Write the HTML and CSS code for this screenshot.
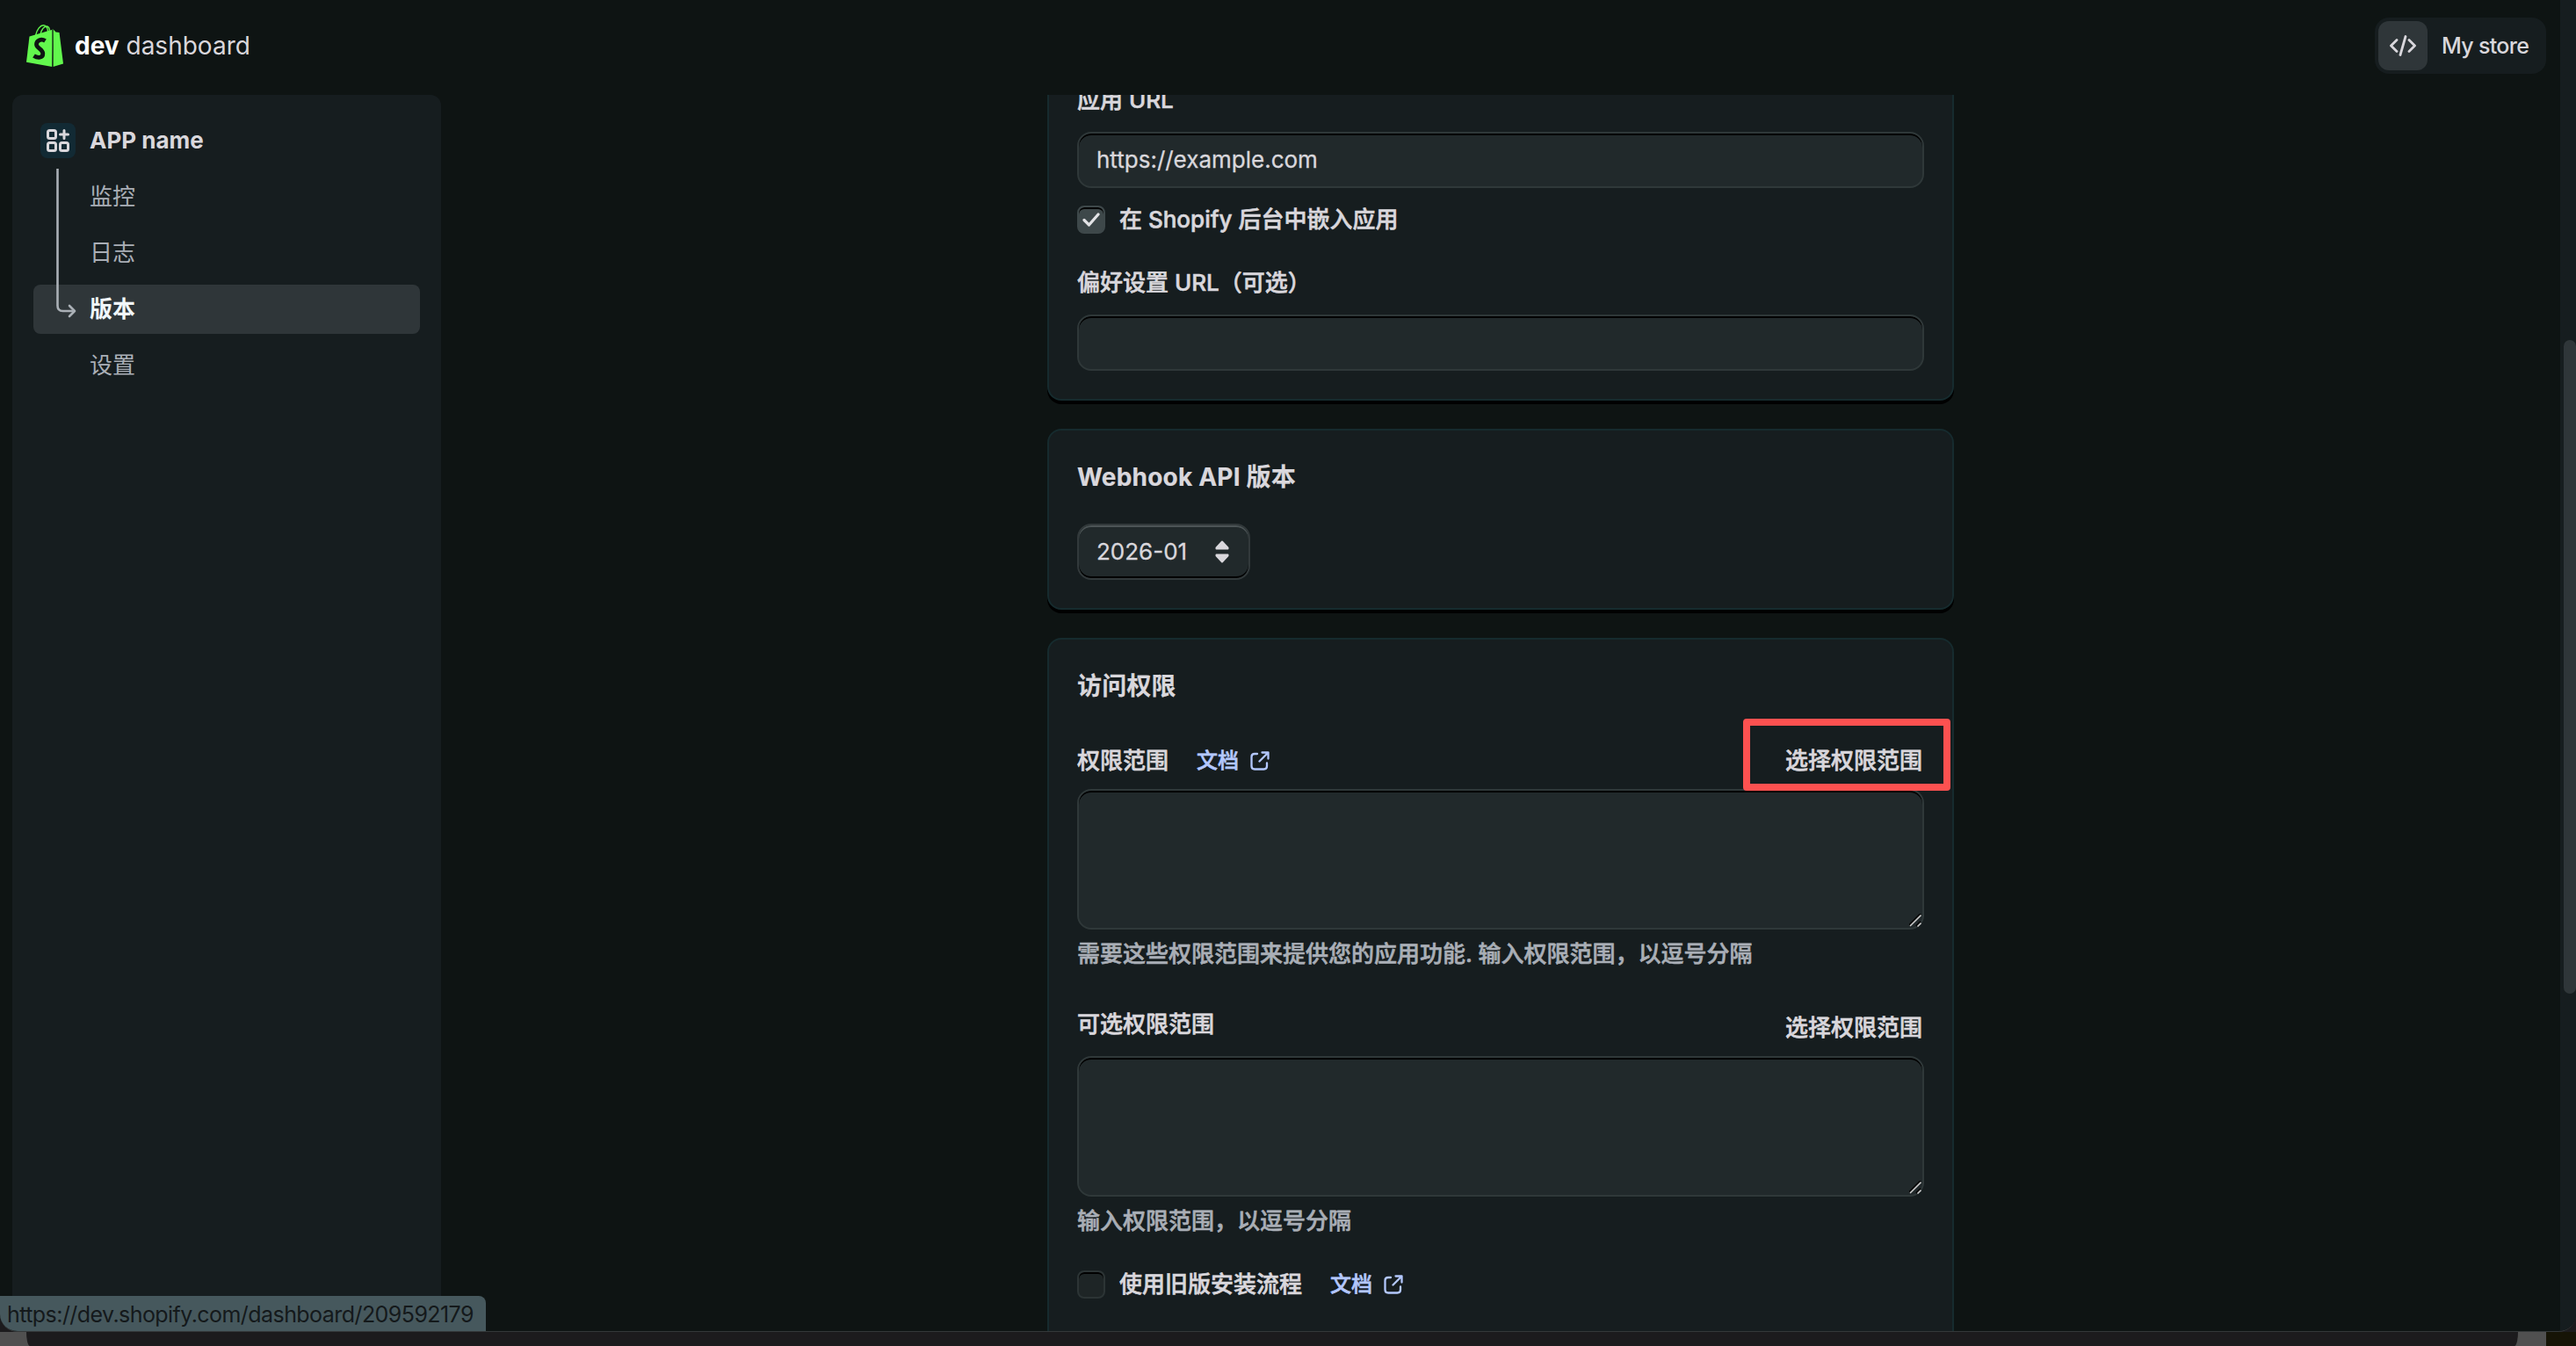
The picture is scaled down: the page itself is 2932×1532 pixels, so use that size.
FILE: index.html
```
<!DOCTYPE html>
<html lang="zh-CN">
<head>
    <meta charset="UTF-8">
    <title>dev dashboard</title>
    <link rel="stylesheet" href="styles.css">
</head>
<body>
    <div class="window">
        <div class="app">
            <header class="header">
                <div class="brand">
                    <svg class="logo" width="42" height="48" viewBox="0 0 42 48">
                        <path d="M3.500 13.500L30.500 5.500L29.400 48L0 42.700Z" fill="#62f84d"/>
                        <path d="M30.700 5.500L33.500 8.500L37.500 9L42 44.500L30.400 48Z" fill="#62f84d"/>
                        <path d="M10.500 12.500C12 5 16 0.800 19.500 0.800C23 0.800 24.500 5 24.500 9M16 11C17.500 5 20.500 2 23.500 2C25.500 2.500 26.500 5 26.500 8" fill="none" stroke="#62f84d" stroke-width="1.400"/>
                        <path d="M29.900 6V48" stroke="#0e1413" stroke-width="1"/>
                        <path d="M21.500 18.500C17 15.500 11.500 18 11.500 22.500C11.500 27 18.800 28 18.800 33C18.800 38 13 38.500 8.500 35.500" fill="none" stroke="#0e1413" stroke-width="4.800"/>
                    </svg>
                    <div class="brand-name"><b>dev</b> dashboard</div>
                </div>
                <div class="store">
                    <div class="store-icon">
                        <svg width="30" height="24" viewBox="0 0 30 24" fill="none" stroke="#d9d7dc" stroke-width="2.800" stroke-linecap="round" stroke-linejoin="round">
                            <path d="M8 5.500L1.500 12L8 18.500M22 5.500L28.500 12L22 18.500M18 1.500L12 22.500"/>
                        </svg>
                    </div>
                    <span>My store</span>
                </div>
            </header>
            <div class="body">
                <nav class="sidebar">
                    <div class="nav-item nav-app">
                        <div class="app-icon">
                            <svg width="26" height="26" viewBox="0 0 26 26" fill="none" stroke="#d9d7dc" stroke-width="3" stroke-linecap="round">
                                <rect x="1.500" y="1.500" width="9" height="9" rx="2"/>
                                <rect x="1.500" y="15.500" width="9" height="9" rx="2"/>
                                <rect x="15.500" y="15.500" width="9" height="9" rx="2"/>
                                <path d="M20 1.500V10.500M15.500 6H24.500"/>
                            </svg>
                        </div>
                        APP name
                    </div>
                    <div class="nav-item">监控</div>
                    <div class="nav-item">日志</div>
                    <div class="nav-item active">版本</div>
                    <div class="nav-item">设置</div>
                    <svg class="nav-line" width="24" height="170" viewBox="0 0 24 170" fill="none" stroke="#aab0b6" stroke-width="2.600">
                        <path d="M1.500 0V156Q1.500 162 7.500 162H21"/>
                        <path d="M15 156L21 162L15 168" stroke-linecap="round" stroke-linejoin="round"/>
                    </svg>
                </nav>
                <main class="main">
                    <section class="card card-url">
                        <div class="label">应用 URL</div>
                        <div class="input">https://example.com</div>
                        <div class="check-row">
                            <div class="checkbox checked">
                                <svg width="20" height="16" viewBox="0 0 20 16" fill="none" stroke="#e3e3e6" stroke-width="3.200" stroke-linecap="round" stroke-linejoin="round">
                                    <path d="M2 8.500L7.500 14L18 2"/>
                                </svg>
                            </div>
                            <span>在 Shopify 后台中嵌入应用</span>
                        </div>
                        <div class="label label-pref">偏好设置 URL（可选）</div>
                        <div class="input"></div>
                    </section>
                    <section class="card card-webhook">
                        <h2>Webhook API 版本</h2>
                        <div class="select">
                            2026-01
                            <svg width="16" height="26" viewBox="0 0 16 26" fill="#d9d7dc" stroke="#d9d7dc" stroke-width="2" stroke-linejoin="round">
                                <path d="M8 1.500L14.500 8.500V9.500H1.500V8.500Z"/>
                                <path d="M8 24.500L14.500 17.500V16.500H1.500V17.500Z"/>
                            </svg>
                        </div>
                    </section>
                    <section class="card card-access">
                        <h2>访问权限</h2>
                        <div class="field-head head-scope">
                            <span>权限范围</span>
                            <span class="link">文档
                                <svg width="22" height="22" viewBox="0 0 22 22" fill="none" stroke="#b3c7fd" stroke-width="2.300" stroke-linecap="round" stroke-linejoin="round">
                                    <path d="M8 3H5Q1.500 3 1.500 6.500V17Q1.500 20.500 5 20.500H15.500Q19 20.500 19 17V13.500M13.500 1.500H20.500V8.500M20.500 1.500L10.500 11.500"/>
                                </svg>
                            </span>
                            <span class="pick">选择权限范围<i class="mark"></i></span>
                        </div>
                        <div class="textarea">
                            <svg class="grip" width="14" height="15" viewBox="0 0 14 15" stroke-width="2"><path d="M0 13L13 0M8 14L13 9" stroke="#000"/><path d="M1 14L13.500 1.500M9.500 14.500L13.500 10.500" stroke="#c9caca" stroke-width="1.600"/></svg>
                        </div>
                        <div class="help">需要这些权限范围来提供您的应用功能. 输入权限范围，以逗号分隔</div>
                        <div class="field-head head-optional">
                            <span>可选权限范围</span>
                            <span class="pick pick-low">选择权限范围</span>
                        </div>
                        <div class="textarea">
                            <svg class="grip" width="14" height="15" viewBox="0 0 14 15" stroke-width="2"><path d="M0 13L13 0M8 14L13 9" stroke="#000"/><path d="M1 14L13.500 1.500M9.500 14.500L13.500 10.500" stroke="#c9caca" stroke-width="1.600"/></svg>
                        </div>
                        <div class="help">输入权限范围，以逗号分隔</div>
                        <div class="check-row check-legacy">
                            <div class="checkbox"></div>
                            <span>使用旧版安装流程</span>
                            <span class="link">文档
                                <svg width="22" height="22" viewBox="0 0 22 22" fill="none" stroke="#b3c7fd" stroke-width="2.300" stroke-linecap="round" stroke-linejoin="round">
                                    <path d="M8 3H5Q1.500 3 1.500 6.500V17Q1.500 20.500 5 20.500H15.500Q19 20.500 19 17V13.500M13.500 1.500H20.500V8.500M20.500 1.500L10.500 11.500"/>
                                </svg>
                            </span>
                        </div>
                    </section>
                </main>
            </div>
        </div>
        <div class="scrollbar"><div class="thumb"></div></div>
        <div class="status">https://dev.shopify.com/dashboard/209592179</div>
    </div>
    <div class="desktop">
        <div class="desk-left"></div>
        <div class="dock"></div>
        <div class="desk-right"></div>
        <div class="desk-end"></div>
    </div>
</body>
</html>
```

FILE: styles.css
```
*{
    box-sizing: border-box;
}
body{
    margin: 0;
    width: 2932px;
    height: 1532px;
    overflow: hidden;
    background-color: #1c1b1d;
    color: #d9d7dc;
    font-family: Inter, "Noto Sans CJK SC", sans-serif;
    font-size: 26px;
    line-height: 40px;
}
svg{
    display: block;
    flex: none;
}
.window{
    position: relative;
    display: flex;
    height: 1516px;
    overflow: hidden;
    background-color: #0e1413;
    border-bottom: 1px solid #343839;
    border-radius: 0 0 20px 20px;
}
.app{
    width: 2914px;
    height: 1515px;
}

/* header */
.header{
    display: flex;
    justify-content: space-between;
    align-items: center;
    height: 108px;
    padding: 0 16px 4px 30px;
}
.brand{
    display: flex;
    align-items: center;
    gap: 13px;
}
.brand-name{
    font-size: 28px;
}
.brand-name b{
    color: #fff;
}
.store{
    display: flex;
    align-items: center;
    gap: 16px;
    width: 195px;
    height: 64px;
    padding-left: 4px;
    border-radius: 16px;
    background-color: #161d1f;
    font-size: 25px;
    font-weight: 500;
    letter-spacing: -0.7px;
}
.store-icon{
    display: flex;
    align-items: center;
    justify-content: center;
    width: 56px;
    height: 56px;
    border-radius: 12px;
    background-color: #2f3639;
}

/* sidebar */
.body{
    display: flex;
    height: 1407px;
    padding-left: 14px;
}
.sidebar{
    position: relative;
    width: 488px;
    padding: 24px;
    border-radius: 12px 12px 0 0;
    background-color: #161d1f;
}
.nav-item{
    display: flex;
    align-items: center;
    height: 56px;
    margin-bottom: 8px;
    padding-left: 64px;
    border-radius: 8px;
    color: #a9aeb6;
}
.nav-app{
    gap: 16px;
    padding-left: 8px;
    color: #d9d7dc;
    font-weight: 700;
}
.app-icon{
    display: flex;
    align-items: center;
    justify-content: center;
    width: 40px;
    height: 40px;
    border-radius: 8px;
    background-color: #122a34;
}
.active{
    background-color: #2f3639;
    color: #f1f7fa;
    font-weight: 700;
}
.nav-line{
    position: absolute;
    left: 50px;
    top: 84px;
}

/* content */
.main{
    width: 1032px;
    height: 1407px;
    margin-left: 690px;
    overflow: hidden;
}
.card{
    display: flow-root;
    margin-bottom: 32px;
    padding: 32px;
    border: 2px solid #162b2e;
    border-radius: 16px;
    background-color: #161d1f;
    box-shadow: 0 4px 0 #000;
    font-weight: 450;
    -webkit-text-stroke: 0.6px;
}
.card-url{
    height: 348px;
    padding-top: 0;
    border-top: 0;
    border-radius: 0 0 16px 16px;
}
.card-webhook{
    height: 206px;
}
.card-access{
    height: 900px;
}
h2{
    margin: 0;
    font-size: 28px;
    font-weight: 700;
    line-height: 42px;
    letter-spacing: 0.2px;
    -webkit-text-stroke: 0.2px;
}
.label{
    margin-top: -14px;
}
.label-pref{
    margin-top: 36px;
}
.input{
    height: 64px;
    margin-top: 16px;
    padding: 10px 20px;
    border: 2px solid #2f3839;
    border-radius: 16px;
    background-color: #21292b;
    box-shadow: inset 0 2px 0 #000;
    font-weight: 400;
    -webkit-text-stroke: 0.3px;
}
.check-row{
    display: flex;
    align-items: center;
    height: 32px;
    margin-top: 20px;
}
.checkbox{
    display: flex;
    align-items: center;
    justify-content: center;
    width: 32px;
    height: 32px;
    margin-right: 16px;
    border: 2px solid #2c3435;
    border-radius: 8px;
    background-color: #1e2526;
    box-shadow: inset 0 2px 0 #000;
}
.checked{
    border-color: #3e484a;
    background-color: #3e484a;
}
.select{
    display: flex;
    align-items: center;
    justify-content: space-between;
    width: 197px;
    height: 64px;
    margin-top: 32px;
    padding: 0 22px 0 20px;
    border: 2px solid #32393b;
    border-radius: 16px;
    background-color: #21292b;
    box-shadow: inset 0 2px 0 #4c5456, inset 0 -2px 0 #000;
    font-weight: 400;
    -webkit-text-stroke: 0.3px;
}
.field-head{
    display: flex;
    align-items: center;
    height: 40px;
}
.head-scope{
    margin-top: 44px;
}
.head-optional{
    margin-top: 40px;
}
.link{
    display: flex;
    align-items: center;
    gap: 13px;
    margin-left: 32px;
    color: #b3c7fd;
    font-size: 24px;
}
.pick{
    position: relative;
    margin-left: auto;
    padding-right: 2px;
}
.pick-low{
    padding-top: 7px;
}
/* red frame round the scope picker */
.mark{
    position: absolute;
    left: -48px;
    top: -28px;
    width: 236px;
    height: 82px;
    border: 8px solid #fd5150;
    border-radius: 4px;
}
.textarea{
    display: flex;
    align-items: flex-end;
    justify-content: flex-end;
    height: 160px;
    margin-top: 12px;
    border: 2px solid #2f3839;
    border-radius: 16px;
    background-color: #21292b;
    box-shadow: inset 0 2px 0 #000;
}
.head-optional + .textarea{
    margin-top: 16px;
}
.grip{
    margin: 0 1px 1px 0;
}
.help{
    margin-top: 8px;
    color: #a9aeb6;
}
.check-legacy{
    margin-top: 36px;
}

/* scrollbar and status bubble */
.scrollbar{
    width: 18px;
    padding: 387px 0 0 4px;
    background-color: #161d1f;
}
.thumb{
    width: 14px;
    height: 744px;
    border-radius: 8px;
    background-color: #2f3639;
}
.status{
    position: absolute;
    left: 0;
    bottom: 0;
    width: 553px;
    height: 40px;
    padding: 2px 0 0 8px;
    border-radius: 0 8px 0 0;
    background-color: #46585d;
    color: #14191b;
    font-size: 25px;
    letter-spacing: -0.56px;
    line-height: 38px;
}

/* strip under the window */
.desktop{
    display: flex;
    height: 16px;
    background-color: #505050;
}
.desk-left{
    width: 30px;
}
.dock{
    width: 2836px;
    border-radius: 0 0 4px 4px / 0 0 16px 16px;
    background-color: #1c1b1d;
}
.desk-right{
    width: 32px;
}
.desk-end{
    width: 34px;
    background-color: #161406;
}
```
